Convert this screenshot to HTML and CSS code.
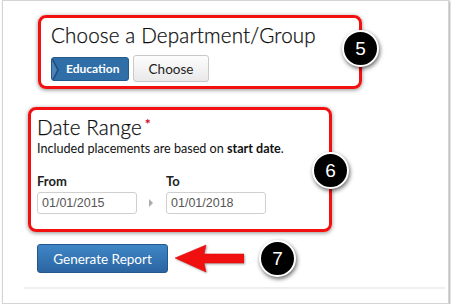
FILE: index.html
```html
<!DOCTYPE html>
<html>
<head>
<meta charset="utf-8">
<link rel="stylesheet" href="styles.css">
</head>
<body>
<div class="card">
  <section class="box box-dept">
    <h2 class="title">Choose a Department/Group</h2>
    <div class="btn-row">
      <span class="crumb">Education</span>
      <button class="btn-choose">Choose</button>
    </div>
    <span class="badge badge-5">5</span>
  </section>

  <section class="box box-date">
    <h2 class="title">Date Range<span class="req">*</span></h2>
    <p class="hint">Included placements are based on <b>start date</b>.</p>
    <div class="fields">
      <div class="field">
        <label>From</label>
        <div class="input">01/01/2015</div>
      </div>
      <span class="sep"></span>
      <div class="field">
        <label>To</label>
        <div class="input">01/01/2018</div>
      </div>
    </div>
    <span class="badge badge-6">6</span>
  </section>

  <div class="actions">
    <button class="btn-generate">Generate Report</button>
    <svg class="arrow" width="70" height="30" viewBox="0 0 70 30">
      <path d="M1 14 L32 1 L30 10 L70 10 L70 19 L30 19 L32 28 Z" fill="#f01010" stroke="#d00" stroke-width="0.5"/>
    </svg>
    <span class="badge badge-7">7</span>
  </div>
  <hr class="rule">
</div>
</body>
</html>
```
FILE: styles.css
```css
* { box-sizing: border-box; }
html, body { margin: 0; padding: 0; background: #fff; }
body { font-family: Lato, "Open Sans", sans-serif; color: #222; }

.card {
  margin: 0 2px;
  width: 447px;
  height: 304px;
  border: 1px solid #d4d4d4;
  box-shadow: 1px 1px 2px rgba(0,0,0,0.35);
  padding-top: 14px;
  position: relative;
}

.box {
  position: relative;
  border: 3px solid #f21010;
  border-radius: 8px;
  box-shadow: 0 1px 4px rgba(0,0,0,0.45);
}

.box-dept {
  margin-left: 35px;
  width: 324px;
  height: 74px;
  padding: 5px 10px 0;
}

.title {
  margin: 0;
  font-weight: 300;
  font-size: 20.6px;
  line-height: 25px;
  color: #0d0d0d;
  letter-spacing: 0.15px;
  -webkit-text-stroke: 0.25px #0d0d0d;
}

.btn-row {
  display: flex;
  align-items: center;
  gap: 4px;
  margin-top: 7px;
}

.crumb {
  display: inline-flex;
  align-items: center;
  height: 24px;
  width: 78px;
  padding-left: 14px;
  background: #2f6ea7;
  border: 1px solid #245a8c;
  border-radius: 3px;
  color: #fff;
  font-size: 12px;
  font-weight: 700;
  position: relative;
  overflow: hidden;
}
.crumb::before {
  content: "";
  position: absolute;
  left: 0;
  top: -1px;
  border-top: 13px solid transparent;
  border-bottom: 13px solid transparent;
  border-left: 7px solid #1f4f7e;
}
.crumb::after {
  content: "";
  position: absolute;
  left: -1px;
  top: 0;
  border-top: 12px solid transparent;
  border-bottom: 12px solid transparent;
  border-left: 6px solid #4d83b9;
}

.btn-choose {
  height: 27px;
  width: 76px;
  font-family: inherit;
  font-size: 13.5px;
  color: #222;
  background: linear-gradient(#fdfdfd, #e9e9e9);
  border: 1px solid #c9c9c9;
  border-radius: 3px;
  padding: 0;
}

.badge {
  position: absolute;
  width: 37px;
  height: 37px;
  border-radius: 50%;
  background: #000;
  border: 2px solid #fff;
  box-shadow: 1px 2px 4px rgba(0,0,0,0.6);
  color: #fff;
  font-family: "Liberation Sans", Arial, sans-serif;
  font-size: 19px;
  display: flex;
  align-items: center;
  justify-content: center;
}
.badge-5 { left: 301px; top: 12px; }
.badge-6 { left: 281px; top: 42px; }
.badge-7 { left: 222px; top: -4px; }

.box-date {
  margin-left: 25px;
  margin-top: 18px;
  width: 304px;
  height: 125px;
  padding: 5px 6px 0;
}

.req {
  color: #d0021b;
  font-size: 14px;
  font-weight: 700;
  vertical-align: top;
  margin-left: 3px;
  line-height: 18px;
  -webkit-text-stroke: 0;
}

.hint {
  margin: 1px 0 0;
  font-size: 12.6px;
  color: #111;
}
.hint b { font-weight: 700; }

.fields {
  display: flex;
  align-items: flex-end;
  margin-top: 17px;
}
.field label {
  display: block;
  font-size: 13px;
  font-weight: 700;
  color: #222;
  margin-bottom: 3px;
}
.input {
  width: 100px;
  height: 22px;
  border: 1px solid #cfcfcf;
  border-radius: 3px;
  font-family: "Liberation Sans", Arial, sans-serif;
  font-size: 12.5px;
  color: #555;
  padding: 3px 4px;
  line-height: 14px;
}
.sep {
  width: 29px;
  height: 22px;
  position: relative;
}
.sep::after {
  content: "";
  position: absolute;
  left: 12px;
  top: 7px;
  border-top: 4px solid transparent;
  border-bottom: 4px solid transparent;
  border-left: 4px solid #aaa;
}

.actions {
  position: relative;
  margin: 12px 0 0 34px;
  height: 29px;
}
.btn-generate {
  width: 131px;
  height: 29px;
  background: linear-gradient(#3f86c6, #2b65a1);
  border: 1px solid #24588c;
  border-radius: 3px;
  color: #fff;
  font-family: inherit;
  font-size: 13.5px;
  font-weight: 400;
  padding: 0;
}
.arrow {
  position: absolute;
  left: 137px;
  top: 0;
  filter: drop-shadow(1px 1px 1px rgba(0,0,0,0.35));
}

.rule {
  margin: 14px 3px 0 21px;
  border: 0;
  height: 2px;
  background: #efefef;
}
```
